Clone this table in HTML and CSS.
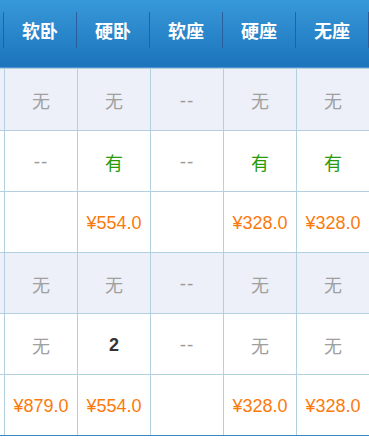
FILE: index.html
```html
<!DOCTYPE html>
<html lang="zh-CN">
<head>
<meta charset="utf-8">
<title>余票</title>
<link rel="stylesheet" href="styles.css">
</head>
<body>
<div class="board">
  <div class="head">
    <div class="hcell"></div>
    <div class="hcell">软卧</div>
    <div class="hcell">硬卧</div>
    <div class="hcell">软座</div>
    <div class="hcell">硬座</div>
    <div class="hcell">无座</div>
    <div class="hcell"></div>
  </div>

  <div class="row shade first">
    <div class="cell"></div>
    <div class="cell none">无</div>
    <div class="cell none">无</div>
    <div class="cell dash">--</div>
    <div class="cell none">无</div>
    <div class="cell none">无</div>
    <div class="cell"></div>
  </div>
  <div class="row">
    <div class="cell"></div>
    <div class="cell dash">--</div>
    <div class="cell yes">有</div>
    <div class="cell dash">--</div>
    <div class="cell yes">有</div>
    <div class="cell yes">有</div>
    <div class="cell"></div>
  </div>
  <div class="row">
    <div class="cell"></div>
    <div class="cell"></div>
    <div class="cell price">¥554.0</div>
    <div class="cell"></div>
    <div class="cell price">¥328.0</div>
    <div class="cell price">¥328.0</div>
    <div class="cell"></div>
  </div>

  <div class="row shade">
    <div class="cell"></div>
    <div class="cell none">无</div>
    <div class="cell none">无</div>
    <div class="cell dash">--</div>
    <div class="cell none">无</div>
    <div class="cell none">无</div>
    <div class="cell"></div>
  </div>
  <div class="row">
    <div class="cell"></div>
    <div class="cell none">无</div>
    <div class="cell count">2</div>
    <div class="cell dash">--</div>
    <div class="cell none">无</div>
    <div class="cell none">无</div>
    <div class="cell"></div>
  </div>
  <div class="row last">
    <div class="cell"></div>
    <div class="cell price">¥879.0</div>
    <div class="cell price">¥554.0</div>
    <div class="cell"></div>
    <div class="cell price">¥328.0</div>
    <div class="cell price">¥328.0</div>
    <div class="cell"></div>
  </div>
</div>
</body>
</html>
```

FILE: styles.css
```css
* { box-sizing: border-box; }

html, body {
  margin: 0;
  padding: 0;
  background: #ffffff;
}

body {
  font-family: "Liberation Sans", "Noto Sans CJK SC", sans-serif;
  width: 369px;
  overflow: hidden;
}

.board {
  width: 369px;
  overflow: hidden;
}

.head {
  display: grid;
  grid-template-columns: 4px repeat(6, 73px);
  width: 443px;
  height: 68px;
  padding-top: 12px;
  background: linear-gradient(to bottom, #3799d9 0%, #2a86ca 50%, #1b74bc 100%);
  border-bottom: 1px solid #4a93d0;
}

.hcell {
  height: 36px;
  border-right: 1px solid #2b5e9e;
  display: flex;
  align-items: center;
  justify-content: center;
  color: #ffffff;
  font-family: "Noto Sans CJK SC", sans-serif;
  font-weight: bold;
  font-size: 18px;
}

.row {
  display: grid;
  grid-template-columns: 5px repeat(6, 73px);
  width: 443px;
  height: 61px;
  border-top: 1px solid #b4cfe0;
  background: #ffffff;
}

.row.first {
  height: 62px;
}

.row.shade {
  background: #edf0f8;
}

.row.last {
  height: 62px;
  border-bottom: 1px solid #3d86c4;
}

.cell {
  border-right: 1px solid #b4cfe0;
  display: flex;
  align-items: center;
  justify-content: center;
  font-size: 18px;
  line-height: 1;
  padding-top: 1px;
}

.none {
  color: #a0a0a0;
  font-family: "Noto Sans CJK SC", sans-serif;
}

.dash {
  color: #9a9a9a;
  font-size: 19px;
  letter-spacing: 1px;
}

.yes {
  color: #2a9a08;
  font-family: "Noto Sans CJK SC", sans-serif;
}

.price {
  color: #fb7a0c;
}

.count {
  color: #333333;
  font-weight: bold;
}
```
